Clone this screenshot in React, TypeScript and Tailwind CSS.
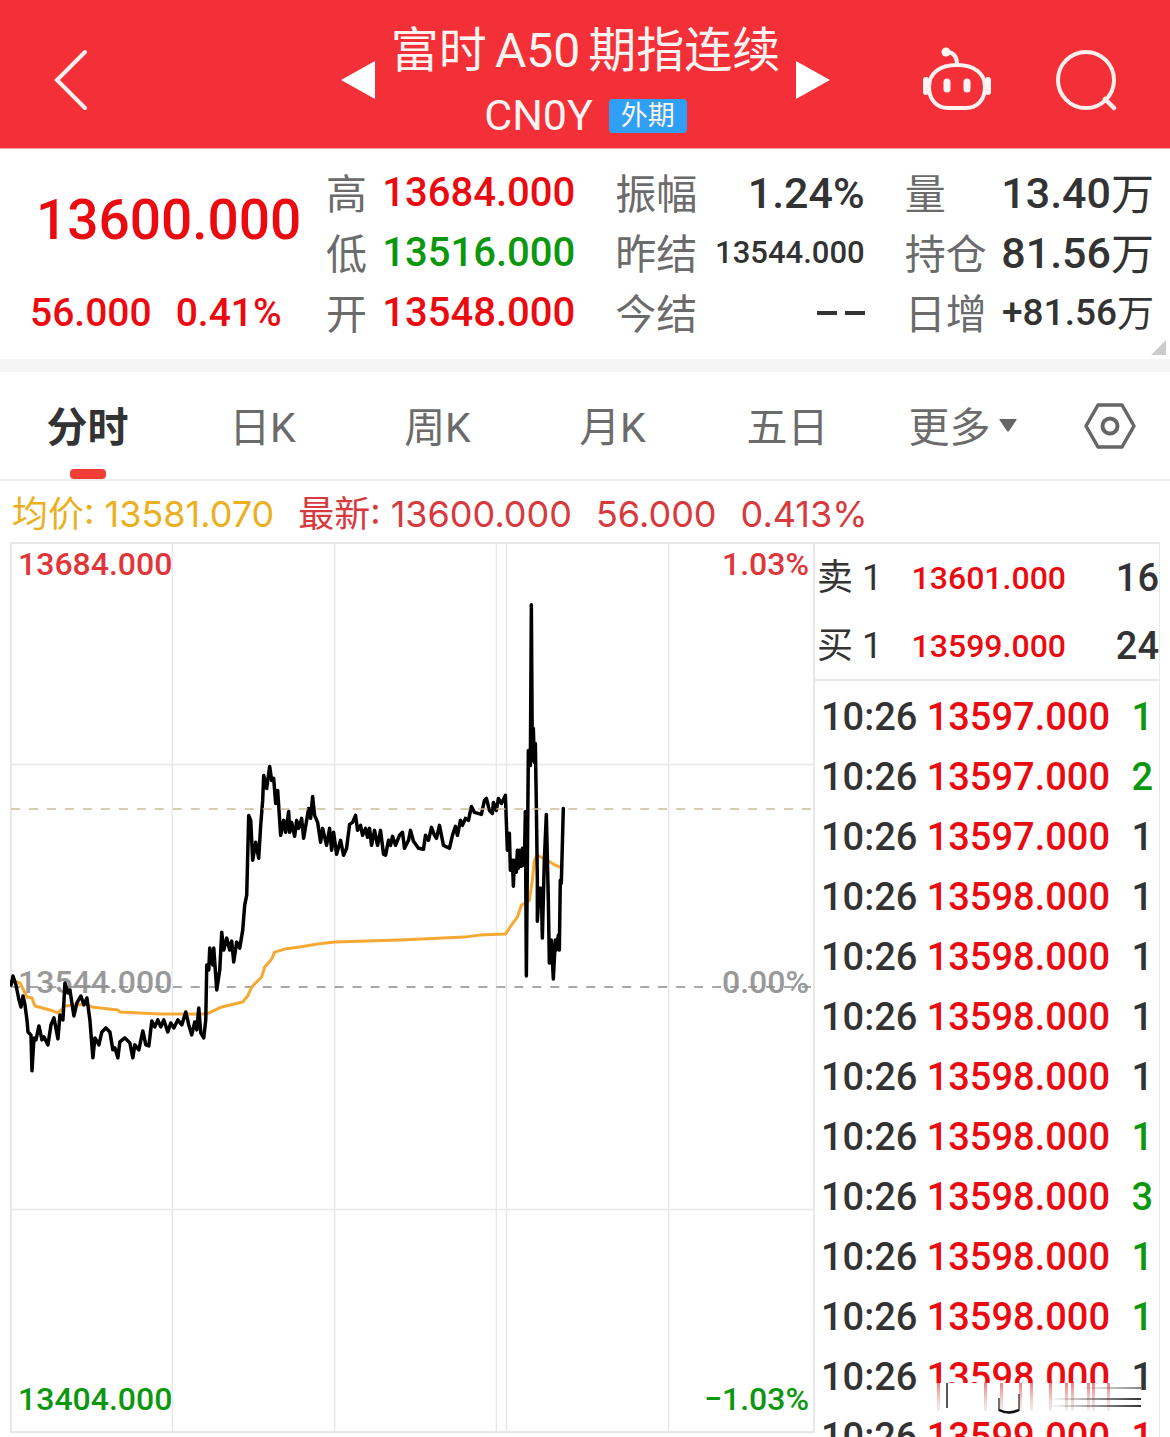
import { useState } from "react";
import { clsx } from "clsx";

type Tone = "up" | "down" | "flat";

const TONE: Record<Tone, string> = {
  up: "text-[#eb0a0f]",
  down: "text-[#0b970e]",
  flat: "text-[#333333]",
};

type Stat = { label: string; value: string; unit?: string; tone: Tone; size: string };

const STATS: Stat[][] = [
  [
    { label: "高", value: "13684.000", tone: "up", size: "text-[40px]" },
    { label: "低", value: "13516.000", tone: "down", size: "text-[40px]" },
    { label: "开", value: "13548.000", tone: "up", size: "text-[40px]" },
  ],
  [
    { label: "振幅", value: "1.24%", tone: "flat", size: "text-[43px]" },
    { label: "昨结", value: "13544.000", tone: "flat", size: "text-[31px]" },
    { label: "今结", value: "--", tone: "flat", size: "text-[43px]" },
  ],
  [
    { label: "量", value: "13.40", unit: "万", tone: "flat", size: "text-[43px]" },
    { label: "持仓", value: "81.56", unit: "万", tone: "flat", size: "text-[43px]" },
    { label: "日增", value: "+81.56", unit: "万", tone: "flat", size: "text-[37px]" },
  ],
];

const TABS = ["分时", "日K", "周K", "月K", "五日"];

const DEPTH = [
  { side: "卖 1", price: "13601.000", qty: 16 },
  { side: "买 1", price: "13599.000", qty: 24 },
];

const TICKS: { price: string; qty: number; tone: Tone }[] = [
  { price: "13597.000", qty: 1, tone: "down" },
  { price: "13597.000", qty: 2, tone: "down" },
  { price: "13597.000", qty: 1, tone: "flat" },
  { price: "13598.000", qty: 1, tone: "flat" },
  { price: "13598.000", qty: 1, tone: "flat" },
  { price: "13598.000", qty: 1, tone: "flat" },
  { price: "13598.000", qty: 1, tone: "flat" },
  { price: "13598.000", qty: 1, tone: "down" },
  { price: "13598.000", qty: 3, tone: "down" },
  { price: "13598.000", qty: 1, tone: "down" },
  { price: "13598.000", qty: 1, tone: "down" },
  { price: "13598.000", qty: 1, tone: "flat" },
  { price: "13599.000", qty: 1, tone: "up" },
];

const PRICE_LINE =
  "11,985 13,976 16,985 19,1000 21,1007 23,996 25,1005 27,1020 28,1032 31,1035 32,1071 34,1038 36,1040 39,1026 42,1040 44,1037 48,1045 51,1025 54,1018 58,1039 60,1015 63,1020 65,983 68,993 70,990 74,1016 77,1003 81,996 84,1005 87,998 90,1020 93,1058 95,1038 99,1045 102,1032 106,1028 110,1032 113,1050 115,1048 118,1058 120,1042 125,1038 130,1043 133,1058 135,1045 139,1050 143,1031 146,1045 149,1046 152,1021 155,1027 158,1020 161,1027 164,1020 168,1032 171,1023 174,1028 178,1020 182,1025 186,1012 189,1025 192,1035 195,1022 197,1030 199,1008 201,1033 204,1038 206,1020 207,965 209,970 210,948 213,965 214,948 217,990 220,970 222,932 224,950 227,938 230,950 232,941 234,962 237,942 240,948 243,930 245,905 247,895 249,815 251,820 253,860 256,842 259,858 261,825 263,800 264,775 267,788 270,766 272,780 274,778 276,803 278,790 281,835 284,820 286,832 289,811 290,832 292,822 295,836 297,820 299,828 302,818 304,838 307,820 309,808 311,818 313,796 315,815 318,822 321,842 323,828 327,845 330,828 332,850 334,832 337,854 341,840 344,855 347,848 350,824 353,822 356,815 358,830 361,825 363,835 366,828 368,837 370,828 372,845 375,830 378,845 381,830 384,854 386,855 389,840 391,845 393,836 396,845 400,835 403,832 405,848 409,840 411,830 414,841 419,848 424,849 426,835 429,840 432,827 435,835 437,838 440,825 444,845 450,848 453,835 456,826 458,835 461,820 463,825 466,818 469,820 472,806 475,812 482,814 485,800 487,798 490,810 493,813 494,802 497,810 499,798 502,803 505,797 506,795 508,850 510,833 511,870 513,860 514,886 515,860 517,872 518,850 519,868 520,850 522,866 523,848 525,865 526,811 527,976 529,750 531,765 532,604 533,760 534,728 535,762 536,743 537,805 538,880 538,921 540,888 542,888 543,938 545,860 547,814 549,900 550,963 552,940 554,979 556,940 557,950 559,935 560,950 561,880 562,883 564,808";

const AVERAGE_LINE =
  "11,980 20,983 27,997 32,998 35,1006 50,1010 58,1013 65,1006 85,1004 92,1007 118,1010 120,1012 160,1014 207,1014 222,1007 243,1002 248,996 252,987 262,977 265,967 272,959 275,952 285,949 300,947 318,944 335,942 400,940 465,937 480,935 506,934 512,925 518,917 522,905 526,903 530,900 533,880 535,860 538,855 548,860 556,865 564,868";

function BackIcon() {
  return (
    <svg width="34" height="62" viewBox="0 0 34 62" fill="none" aria-hidden>
      <path d="M31 3 3 31l28 28" stroke="#fff0ee" strokeWidth="4" strokeLinecap="round" />
    </svg>
  );
}

function RobotIcon() {
  return (
    <svg width="70" height="66" viewBox="0 0 70 66" fill="none" aria-hidden>
      <path
        d="M35 18c17 0 28 8 28 22 0 13-8 21-19 21H26C15 61 7 53 7 40 7 26 18 18 35 18Z"
        stroke="#fff4f2"
        strokeWidth="4"
      />
      <path d="M35 17c0-7-3-11-9-12" stroke="#fff4f2" strokeWidth="4" />
      <circle cx="24" cy="5" r="4.500" fill="#fff4f2" />
      <path d="M4 33v12M66 33v12" stroke="#fff4f2" strokeWidth="6" strokeLinecap="round" />
      <path d="M25 35v7M45 35v7" stroke="#fff4f2" strokeWidth="7" strokeLinecap="round" />
    </svg>
  );
}

function SearchIcon() {
  return (
    <svg width="61" height="61" viewBox="0 0 61 61" fill="none" aria-hidden>
      <circle cx="30" cy="30" r="28" stroke="#fff0ee" strokeWidth="4" />
      <path d="m49 49 9 9" stroke="#fff0ee" strokeWidth="4.500" strokeLinecap="round" />
    </svg>
  );
}

function SettingsIcon() {
  return (
    <svg width="52" height="48" viewBox="0 0 52 48" fill="none" stroke="#666" aria-hidden>
      <path d="M14 3h24l12 21-12 21H14L2 24 14 3Z" strokeWidth="3.500" strokeLinejoin="round" />
      <circle cx="26" cy="24" r="7.500" strokeWidth="4" />
    </svg>
  );
}

function Header() {
  return (
    <header className="flex items-center border-b border-[#f7a0a0] bg-[#f33038] pt-3 text-[#fff4f2]">
      <div className="flex flex-1 pl-[54px]">
        <button type="button" aria-label="返回">
          <BackIcon />
        </button>
      </div>
      <div className="flex items-center gap-4">
        <button type="button" aria-label="上一个">
          <svg width="34" height="38" viewBox="0 0 34 38" fill="#fff" aria-hidden>
            <path d="M34 0v38L0 19Z" />
          </svg>
        </button>
        <div className="flex flex-col items-center pt-1.5">
          <h1 className="text-5xl/[65px]">
            富时<span className="mx-2">A50</span>期指连续
          </h1>
          <p className="flex items-center gap-4 text-[43px]/[65px]">
            CN0Y
            <span className="rounded-sm bg-[#2fa0f6] px-3 text-[27px]/[34px]">外期</span>
          </p>
        </div>
        <button type="button" aria-label="下一个">
          <svg width="34" height="38" viewBox="0 0 34 38" fill="#fff" aria-hidden>
            <path d="M0 0v38l34-19Z" />
          </svg>
        </button>
      </div>
      <div className="flex flex-1 items-center justify-end gap-16 pr-[53px]">
        <button type="button" aria-label="智能助手">
          <RobotIcon />
        </button>
        <button type="button" aria-label="搜索">
          <SearchIcon />
        </button>
      </div>
    </header>
  );
}

function Summary() {
  return (
    <section className="relative grid grid-cols-[286px_1fr_1fr_1fr] gap-x-10 border-b-[13px] border-[#f5f5f5] pb-4 pr-4 pt-3.5">
      <div className={clsx("flex flex-col justify-between pt-3 font-medium", TONE.up)}>
        <p className="pl-9 text-[55px]/[90px]">13600.000</p>
        <p className="flex gap-6 pl-[30px] text-[39px]/[60px]">
          <span>56.000</span>
          <span>0.41%</span>
        </p>
      </div>
      {STATS.map((group) => (
        <dl key={group[0].label}>
          {group.map((stat) => (
            <div key={stat.label} className="flex h-[60px] items-center justify-between whitespace-nowrap">
              <dt className="pt-1 text-[41px]/[60px] text-[#6b6b6b]">{stat.label}</dt>
              <dd className={clsx("flex items-center font-medium", TONE[stat.tone], stat.size)}>
                {stat.value === "--" ? (
                  <span className="flex gap-2" aria-label="--">
                    <span className="h-1 w-5 bg-[#333333]" />
                    <span className="h-1 w-5 bg-[#333333]" />
                  </span>
                ) : (
                  <span className="leading-[60px]">{stat.value}</span>
                )}
                {stat.unit && <span className="pt-1 leading-[60px] font-normal">{stat.unit}</span>}
              </dd>
            </div>
          ))}
        </dl>
      ))}
      <svg className="absolute bottom-1 right-1" width="15" height="15" viewBox="0 0 15 15" fill="#ccc" aria-hidden>
        <path d="M15 0v15H0Z" />
      </svg>
    </section>
  );
}

function PeriodTabs() {
  const [active, setActive] = useState(TABS[0]);

  return (
    <nav className="flex h-[109px] border-b-2 border-[#ececec] text-[41px] text-[#6b6b6b]">
      {TABS.map((tab) => (
        <button
          key={tab}
          type="button"
          onClick={() => setActive(tab)}
          className={clsx("relative flex-1 pt-1.5", tab === active && "font-bold text-[#333333]")}
        >
          {tab}
          {tab === active && (
            <span className="absolute bottom-0 left-1/2 h-2.5 w-9 -translate-x-1/2 rounded bg-[#f03e36]" />
          )}
        </button>
      ))}
      <button type="button" className="flex flex-1 items-center justify-center gap-2">
        <span className="pt-1.5">更多</span>
        <svg width="18" height="13" viewBox="0 0 18 13" fill="#666" aria-hidden>
          <path d="M1 0h16q1 0 .5 1L10 12q-1 1-2 0L.5 1Q0 0 1 0Z" />
        </svg>
      </button>
      <button type="button" aria-label="设置" className="flex w-[120px] items-center justify-center">
        <SettingsIcon />
      </button>
    </nav>
  );
}

function AxisRow({ left, right, className }: { left: string; right: string; className: string }) {
  return (
    <div className={clsx("flex justify-between", className)}>
      <span>{left}</span>
      <span>{right}</span>
    </div>
  );
}

function Chart() {
  return (
    <div className="relative mb-1 min-w-0 flex-1">
      <div className="absolute inset-0 flex flex-col justify-between pb-3.5 pl-2 pr-1.5 pt-0.5 text-[32px]/[40px] font-medium">
        <AxisRow left="13684.000" right="1.03%" className="text-[#e2353a]" />
        <AxisRow left="13544.000" right="0.00%" className="text-[#999999]" />
        <AxisRow left="13404.000" right="−1.03%" className="text-[#0b970e]" />
      </div>
      <svg
        className="absolute inset-0 h-full w-full"
        viewBox="10 541 806 893"
        preserveAspectRatio="none"
        fill="none"
        aria-label="分时走势图"
      >
        <g stroke="#e8e8e8" strokeWidth="1.500">
          <path d="M11 542H815V1433H11Z" strokeWidth="2" />
          <path d="M172.500 542V1433M335 542V1433M497 542V1433M507 542V1433M669.500 542V1433" />
          <path d="M11 764H815M11 1210H815" />
        </g>
        <path d="M11 987H815" stroke="#8c8c8c" strokeWidth="1.500" strokeDasharray="9 9" />
        <polyline points={AVERAGE_LINE} stroke="#f5a933" strokeWidth="3" strokeLinejoin="round" />
        <polyline
          points={PRICE_LINE}
          stroke="#000"
          strokeWidth="3.500"
          strokeLinejoin="round"
          strokeLinecap="round"
        />
        <path d="M11 808.500H815" stroke="#c9bf94" strokeWidth="1.500" strokeDasharray="9 9" />
      </svg>
    </div>
  );
}

// Erased patch over the lower tick rows: white block with faded streaks.
function Smudge() {
  const reds = [8, 55, 71, 90, 101, 120, 136, 142, 158, 163, 178];

  return (
    <svg
      className="pointer-events-none absolute right-3.5 top-[838px]"
      width="216"
      height="34"
      viewBox="0 0 216 34"
      fill="none"
      aria-hidden
    >
      <defs>
        <linearGradient id="streak-red" x1="0" y1="0" x2="0" y2="1">
          <stop offset="0" stopColor="#e8302f" stopOpacity="0.600" />
          <stop offset="1" stopColor="#c88" stopOpacity="0.150" />
        </linearGradient>
        <linearGradient id="streak-dark" x1="0" y1="0" x2="1" y2="0">
          <stop offset="0" stopColor="#333" stopOpacity="0" />
          <stop offset="1" stopColor="#333" />
        </linearGradient>
      </defs>
      <path d="M0 1H198V33H0Z" fill="#fff" />
      {reds.map((x) => (
        <rect key={x} x={x} y="1" width="3" height="28" fill="url(#streak-red)" />
      ))}
      <path d="M18 1V26" stroke="#555" strokeWidth="2" />
      <path d="M70 16V28q10 5 20 0V12" stroke="#444" strokeWidth="1.500" />
      <path d="M70 28q10 5 20 0" stroke="#111" strokeWidth="2.500" />
      <rect x="150" y="5" width="62" height="2" fill="url(#streak-dark)" opacity="0.600" />
      <rect x="120" y="16" width="92" height="2" fill="url(#streak-dark)" />
      <rect x="120" y="23" width="92" height="2" fill="url(#streak-dark)" />
    </svg>
  );
}

function OrderPanel() {
  return (
    <aside className="relative w-[345px] shrink-0 overflow-hidden border-r border-t-2 border-[#e8e8e8]">
      <div className="absolute inset-x-0 top-0">
        <table className="w-full border-b-2 border-[#e8e8e8] text-[#333333]">
          <tbody>
            {DEPTH.map((row) => (
              <tr key={row.side} className="h-[68px]">
                <th scope="row" className="pl-0.5 text-left text-[36px]/[40px] font-normal">
                  {row.side}
                </th>
                <td className={clsx("text-right text-[32px]/[40px] font-medium", TONE.up)}>{row.price}</td>
                <td className="w-[93px] text-right text-[38px]/[40px] font-medium">{row.qty}</td>
              </tr>
            ))}
          </tbody>
        </table>
        <table className="mt-1.5 w-full text-[38px]/[40px] font-medium">
          <tbody>
            {TICKS.map((tick, i) => (
              <tr key={i} className="h-[60px]">
                <td className="pl-1.5 text-[#333333]">10:26</td>
                <td className={clsx("text-right", TONE.up)}>{tick.price}</td>
                <td className={clsx("w-[49px] pr-1.5 text-right", TONE[tick.tone])}>{tick.qty}</td>
              </tr>
            ))}
          </tbody>
        </table>
        <Smudge />
      </div>
    </aside>
  );
}

export default function App() {
  return (
    <main className="flex h-screen flex-col overflow-hidden bg-white font-[Roboto,'Noto_Sans_CJK_SC',sans-serif]">
      <Header />
      <Summary />
      <PeriodTabs />
      <p className="flex h-[61px] items-center gap-6 whitespace-nowrap px-3 pt-1 font-[Inter,'Noto_Sans_CJK_SC',sans-serif] text-[36px] text-[#d8393d]">
        <span className="text-[#eab01e]">均价: 13581.070</span>
        <span>最新: 13600.000</span>
        <span>56.000</span>
        <span>0.413%</span>
      </p>
      <div className="flex min-h-0 flex-1 px-2.5">
        <Chart />
        <OrderPanel />
      </div>
    </main>
  );
}
